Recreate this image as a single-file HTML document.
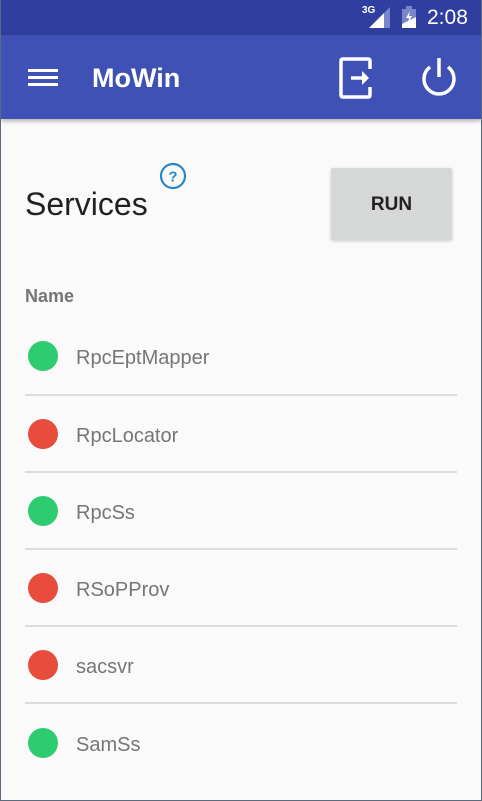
<!DOCTYPE html>
<html><head><meta charset="utf-8"><style>
*{margin:0;padding:0;box-sizing:border-box}
html,body{width:482px;height:801px;overflow:hidden;background:#5a6a80;font-family:"Liberation Sans",sans-serif}
#f{position:absolute;left:1px;top:0;width:480px;height:800px;background:#fafafa;overflow:hidden}
#sb{position:absolute;left:0;top:0;width:480px;height:35px;background:#303f9f}
#tb{position:absolute;left:0;top:35px;width:480px;height:84px;background:#3f51b5;box-shadow:0 2px 4px rgba(0,0,0,.3)}
.t{position:absolute;white-space:nowrap}
.dot{position:absolute;left:27px;width:30px;height:30px;border-radius:50%}
.g{background:#2ecc71}.r{background:#e74c3c}
.sep{position:absolute;left:24px;width:432px;height:2px;background:#dcdcdc}
.nm{position:absolute;left:75px;font-size:20px;color:#757575}
</style></head><body><div id="f">
<div id="sb">
<div class="t" style="left:361px;top:5px;font-size:10px;font-weight:bold;color:#fff">3G</div>
<svg style="position:absolute;left:368px;top:7px" width="22" height="22"><polygon points="0,21 15,6 15,21" fill="#fff"/><polygon points="15,6 21,0 21,21 15,21" fill="#7986cb"/></svg>
<svg style="position:absolute;left:401px;top:6px" width="16" height="23"><rect x="4" y="0" width="6" height="3" fill="#7986cb"/><rect x="0" y="3" width="14" height="19" fill="#7986cb"/><polygon points="0,22 14,22 14,11 0,18" fill="#fff"/><polygon points="8,5 4,12 7,12 6,17 10,10 7,10" fill="#fff"/></svg>
<div class="t" style="left:426px;top:6px;font-size:21px;color:#fff">2:08</div>
</div>
<div id="tb">
<svg style="position:absolute;left:27px;top:33px" width="30" height="20"><rect y="1" width="30" height="3" fill="#fff"/><rect y="8" width="30" height="3" fill="#fff"/><rect y="15" width="30" height="3" fill="#fff"/></svg>
<div class="t" style="left:91px;top:28px;font-size:27px;font-weight:bold;color:#fff">MoWin</div>
<svg style="position:absolute;left:337px;top:22px" width="38" height="42" fill="none" stroke="#fff" stroke-width="3.5"><path d="M32 12V4Q32 2 30 2H5Q3 2 3 4V38Q3 40 5 40H30Q32 40 32 38V30"/><path d="M13 21H29" /><path d="M24 14L31 21L24 28" fill="#fff" stroke-width="0"/></svg>
<svg style="position:absolute;left:418px;top:21px" width="40" height="42" fill="none" stroke="#fff" stroke-width="3.5"><path d="M11 11A15 15 0 1 0 29 11"/><path d="M20 2V21"/></svg>
</div>
<div class="t" style="left:24px;top:186px;font-size:32px;color:#212121">Services</div>
<svg style="position:absolute;left:158px;top:162px" width="28" height="28"><circle cx="14" cy="14" r="12" fill="none" stroke="#2a86c6" stroke-width="2.2"/><text x="14" y="19.5" font-size="15" font-weight="bold" text-anchor="middle" fill="#2a86c6" font-family="Liberation Sans">?</text></svg>
<div style="position:absolute;left:330px;top:168px;width:121px;height:72px;background:#d6d7d7;border-radius:2px;box-shadow:0 1px 3px rgba(0,0,0,.2);text-align:center;line-height:74px;font-size:19px;font-weight:bold;color:#212121">RUN</div>
<div class="t" style="left:24px;top:286px;font-size:18px;font-weight:bold;color:#757575">Name</div>
<div class="dot g" style="top:341px"></div><div class="nm" style="top:347px">RpcEptMapper</div>
<div class="sep" style="top:394px"></div>
<div class="dot r" style="top:419px"></div><div class="nm" style="top:425px">RpcLocator</div>
<div class="sep" style="top:471px"></div>
<div class="dot g" style="top:496px"></div><div class="nm" style="top:502px">RpcSs</div>
<div class="sep" style="top:548px"></div>
<div class="dot r" style="top:573px"></div><div class="nm" style="top:579px">RSoPProv</div>
<div class="sep" style="top:625px"></div>
<div class="dot r" style="top:650px"></div><div class="nm" style="top:656px">sacsvr</div>
<div class="sep" style="top:702px"></div>
<div class="dot g" style="top:728px"></div><div class="nm" style="top:734px">SamSs</div>
</div></body></html>
